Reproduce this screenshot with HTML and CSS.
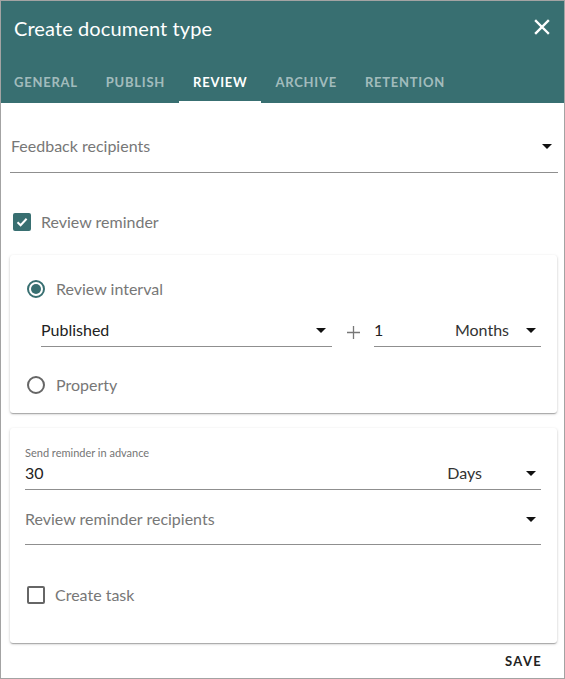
FILE: index.html
```html
<!DOCTYPE html>
<html>
<head>
<meta charset="utf-8">
<link rel="stylesheet" href="styles.css">
</head>
<body>
<div class="dialog">
  <header class="header">
    <div class="titlebar">
      <h1 class="title">Create document type</h1>
      <svg class="close" width="16" height="16" viewBox="0 0 16 16"><path d="M2 2L14 14M14 2L2 14" stroke="#fff" stroke-width="2.4" stroke-linecap="square"/></svg>
    </div>
    <nav class="tabs">
      <div class="tab">General</div>
      <div class="tab">Publish</div>
      <div class="tab active">Review</div>
      <div class="tab">Archive</div>
      <div class="tab">Retention</div>
    </nav>
  </header>
  <main class="content">
    <div class="field feedback">
      <span class="placeholder">Feedback recipients</span>
      <span class="arrow"></span>
    </div>
    <label class="check-row top-check">
      <span class="checkbox checked"><svg width="14" height="14" viewBox="0 0 14 14"><path d="M2.5 7.2L5.6 10.2L11.6 3.8" fill="none" stroke="#fff" stroke-width="2"/></svg></span>
      <span class="check-label">Review reminder</span>
    </label>
    <section class="card card-interval">
      <div class="radio-row">
        <span class="radio checked"><span class="dot"></span></span>
        <span class="check-label">Review interval</span>
      </div>
      <div class="interval-row">
        <div class="field select published">
          <span class="value">Published</span>
          <span class="arrow"></span>
        </div>
        <span class="plus"><svg width="13" height="13" viewBox="0 0 13 13"><path d="M6.5 0V13M0 6.5H13" stroke="#777" stroke-width="1.3"/></svg></span>
        <div class="field select amount">
          <span class="value">1</span>
          <span class="unit">Months</span>
          <span class="arrow"></span>
        </div>
      </div>
      <div class="radio-row property">
        <span class="radio"></span>
        <span class="check-label">Property</span>
      </div>
    </section>
    <section class="card card-reminder">
      <div class="field advance">
        <span class="small-label">Send reminder in advance</span>
        <div class="advance-line">
          <span class="value">30</span>
          <span class="unit">Days</span>
          <span class="arrow"></span>
        </div>
      </div>
      <div class="field recipients">
        <span class="placeholder">Review reminder recipients</span>
        <span class="arrow"></span>
      </div>
      <label class="check-row task">
        <span class="checkbox"></span>
        <span class="check-label">Create task</span>
      </label>
    </section>
    <div class="actions">
      <button class="save">Save</button>
    </div>
  </main>
</div>
</body>
</html>
```
FILE: styles.css
```css
* { box-sizing: border-box; }
html, body { margin: 0; padding: 0; background: #fff; }
body { font-family: "Lato", "Open Sans", sans-serif; color: #222; }

.dialog {
  width: 565px;
  height: 679px;
  border: 1px solid #a3a3a3;
  display: flex;
  flex-direction: column;
  overflow: hidden;
}

.header { background: #386f71; color: #fff; }
.titlebar {
  height: 54px;
  display: flex;
  align-items: center;
  justify-content: space-between;
  padding: 0 14px 0 13px;
}
.title {
  margin: 0;
  font-size: 20px;
  font-weight: 400;
  letter-spacing: 0.1px;
}
.close { display: block; margin-top: -2px; }

.tabs {
  height: 48px;
  display: flex;
  margin-left: -1px;
}
.tab {
  padding: 8px 14px 0;
  display: flex;
  align-items: center;
  font-size: 13px;
  font-weight: 700;
  text-transform: uppercase;
  letter-spacing: 0.75px;
  color: rgba(255, 255, 255, 0.55);
  border-bottom: 2px solid transparent;
}
.tab.active { color: #fff; border-bottom-color: #fff; }

.content {
  flex: 1;
  display: flex;
  flex-direction: column;
  padding: 0 6px 0 9px;
}

.field {
  display: flex;
  align-items: center;
  border-bottom: 1px solid #8f8f8f;
  font-size: 16px;
  line-height: 22px;
}
.placeholder { color: #777; flex: 1; }
.value { color: #222; flex: 1; }
.unit { color: #333; margin-right: 17px; }

.arrow {
  width: 0;
  height: 0;
  border-left: 5px solid transparent;
  border-right: 5px solid transparent;
  border-top: 5px solid #111;
  margin-right: 6px;
}

.feedback { padding: 32px 0 15px 1px; }

.check-row, .radio-row {
  display: flex;
  align-items: center;
  font-size: 16px;
}
.check-label { color: #777; line-height: 18px; }
.top-check { margin-top: 40px; padding-left: 3px; }

.checkbox {
  width: 18px;
  height: 18px;
  border: 2px solid #666;
  border-radius: 2px;
  margin-right: 10px;
  display: flex;
  align-items: center;
  justify-content: center;
}
.checkbox.checked { background: #386f71; border-color: #386f71; }
.checkbox svg { display: block; }

.card {
  margin-right: 1px;
  background: #fff;
  border-radius: 3px;
  box-shadow: 0 1px 3px rgba(0,0,0,0.2), 0 1px 1px rgba(0,0,0,0.14), 0 2px 1px -1px rgba(0,0,0,0.12);
}

.card-interval {
  margin-top: 24px;
  padding: 25px 16px 19px 17px;
}
.radio {
  width: 18px;
  height: 18px;
  border-radius: 50%;
  border: 2px solid #666;
  margin-right: 11px;
  display: flex;
  align-items: center;
  justify-content: center;
}
.radio.checked { border-color: #386f71; }
.radio .dot { width: 10px; height: 10px; border-radius: 50%; background: #386f71; }

.interval-row {
  display: flex;
  align-items: flex-end;
  margin-top: 21px;
  padding-left: 14px;
}
.select { padding: 0 0 5px 0; }
.published { width: 291px; }
.published .arrow { margin-right: 6px; }
.plus {
  width: 42px;
  display: flex;
  justify-content: center;
  padding-bottom: 8px;
}
.plus svg { display: block; }
.amount { flex: 1; }
.amount .unit { margin-right: 17px; }
.amount .arrow { margin-right: 5px; }

.property { margin-top: 29px; }

.card-reminder {
  margin-top: 15px;
  padding: 19px 16px 39px 15px;
}
.advance { flex-direction: column; align-items: stretch; padding-bottom: 5px; }
.small-label { font-size: 11px; line-height: 12px; color: #757575; }
.advance-line { display: flex; align-items: center; margin-top: 3px; }
.advance-line .unit { margin-right: 44px; }
.advance-line .arrow { margin-right: 5px; }

.recipients { padding: 18px 0 14px 0; }
.recipients .arrow { margin-right: 5px; }

.task { margin-top: 41px; padding-left: 2px; }

.actions {
  display: flex;
  justify-content: flex-end;
  padding: 10px 16px 0 0;
}
.save {
  border: 0;
  background: none;
  padding: 0;
  font-family: inherit;
  font-size: 13px;
  font-weight: 700;
  letter-spacing: 1.3px;
  text-transform: uppercase;
  color: #222;
}
```
